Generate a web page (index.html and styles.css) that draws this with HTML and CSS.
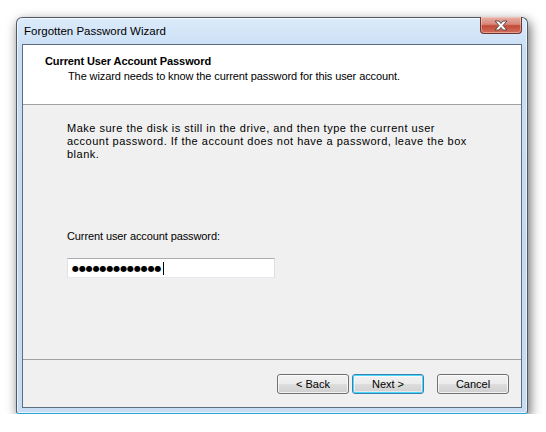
FILE: index.html
```html
<!DOCTYPE html>
<html lang="en">
<head>
    <meta charset="UTF-8">
    <title>Forgotten Password Wizard</title>
    <link rel="stylesheet" href="styles.css">
</head>
<body>
    <div class="window">
        <div class="titlebar">
            <span class="title">Forgotten Password Wizard</span>
            <div class="close-btn">
                <svg width="16" height="11" viewBox="0 0 16 11">
                    <path d="M2 1 H6 L8 3.5 L10 1 H14 L10 5.5 L14 10 H10 L8 7.5 L6 10 H2 L6 5.5 Z" fill="#fff" stroke="#5a4a4a" stroke-width="1" stroke-linejoin="round"/>
                </svg>
            </div>
        </div>

        <div class="client">
            <div class="header">
                <h1 class="header-title">Current User Account Password</h1>
                <p class="header-subtitle">The wizard needs to know the current password for this user account.</p>
            </div>

            <div class="content">
                <p class="intro">
                    Make sure the disk is still in the drive, and then type the current user<br>
                    account password. If the account does not have a password, leave the box<br>
                    blank.
                </p>
                <label class="field-label">Current user account password:</label>
                <div class="password-box">
                    <span class="dots">&#9679;&#9679;&#9679;&#9679;&#9679;&#9679;&#9679;&#9679;&#9679;&#9679;&#9679;&#9679;&#9679;</span><span class="caret"></span>
                </div>
            </div>

            <div class="footer">
                <button class="btn">&lt; Back</button>
                <button class="btn btn-default">Next &gt;</button>
                <button class="btn btn-cancel">Cancel</button>
            </div>
        </div>
    </div>
</body>
</html>
```

FILE: styles.css
```css
* {
    margin: 0;
    padding: 0;
    box-sizing: border-box;
}

body {
    background: #fff;
    font-family: 'Liberation Sans', Arial, sans-serif;
    font-size: 11px;
    letter-spacing: -0.1px;
    color: #000;
}

.window {
    margin: 17px 0 0 16px;
    width: 512px;
    height: 397px;
    display: flex;
    flex-direction: column;
    padding: 0 5px 5px;
    border: 1px solid #505a66;
    border-bottom-color: #2fa4dc;
    border-radius: 6px 6px 3px 3px;
    background: linear-gradient(180deg, #dcebfa 0%, #c9def5 8%, #c4daf3 60%, #c8ddf4 100%);
    box-shadow: 2px 4px 12px rgba(0, 0, 0, 0.6), inset 0 0 0 1px rgba(255, 255, 255, 0.6);
}

.titlebar {
    height: 26px;
    display: flex;
    align-items: flex-start;
    justify-content: space-between;
}

.title {
    font-size: 11.5px;
    letter-spacing: 0;
    color: #000;
    padding: 7px 0 0 2px;
}

.close-btn {
    width: 42px;
    height: 17px;
    margin-top: -1px;
    display: flex;
    align-items: center;
    justify-content: center;
    border: 1px solid #6b3530;
    border-top: none;
    border-radius: 0 0 4px 4px;
    background: linear-gradient(180deg, #e8b1a6 0%, #d7877a 45%, #c24a38 55%, #d46f5c 100%);
    box-shadow: inset 0 0 0 1px rgba(255, 220, 210, 0.45);
}

.client {
    flex: 1;
    display: flex;
    flex-direction: column;
    border: 1px solid #5f6e7e;
    background: #f0f0f0;
}

.header {
    height: 60px;
    background: #fff;
    border-bottom: 1px solid #a0a0a0;
    padding: 10px 0 0 22px;
    line-height: 13px;
}

.header-title {
    font-size: 11px;
    font-weight: 700;
    padding-bottom: 2px;
}

.header-subtitle {
    padding-left: 23px;
}

.content {
    flex: 1;
    padding: 17px 0 0 44px;
    line-height: 13px;
}

.intro {
    letter-spacing: 0.5px;
}

.field-label {
    display: block;
    margin-top: 69px;
}

.password-box {
    margin-top: 15px;
    width: 208px;
    height: 20px;
    display: flex;
    align-items: center;
    padding-left: 4px;
    background: #fff;
    border: 1px solid #abadb3;
    border-left-color: #e2e3ea;
    border-right-color: #dbdfe6;
    border-bottom-color: #e3e9ef;
}

.dots {
    font-family: 'DejaVu Sans', sans-serif;
    font-size: 8px;
    letter-spacing: -0.1px;
}

.caret {
    width: 1px;
    height: 13px;
    margin-left: 2px;
    background: #000;
}

.footer {
    height: 48px;
    border-top: 1px solid #a0a0a0;
    display: flex;
    align-items: flex-start;
    justify-content: flex-end;
    padding: 14px 12px 0 0;
    gap: 3px;
}

.btn {
    width: 72px;
    height: 20px;
    font-family: 'Liberation Sans', Arial, sans-serif;
    font-size: 11px;
    color: #000;
    border: 1px solid #707070;
    border-radius: 3px;
    background: linear-gradient(180deg, #f2f2f2 0%, #ebebeb 48%, #dddddd 52%, #cfcfcf 100%);
    box-shadow: inset 0 0 0 1px rgba(255, 255, 255, 0.75);
}

.btn-default {
    border-color: #3c7fb1;
    box-shadow: inset 0 0 0 1px #48d8fb, inset 0 0 0 2px rgba(255, 255, 255, 0.5);
}

.btn-cancel {
    margin-left: 10px;
}
```
